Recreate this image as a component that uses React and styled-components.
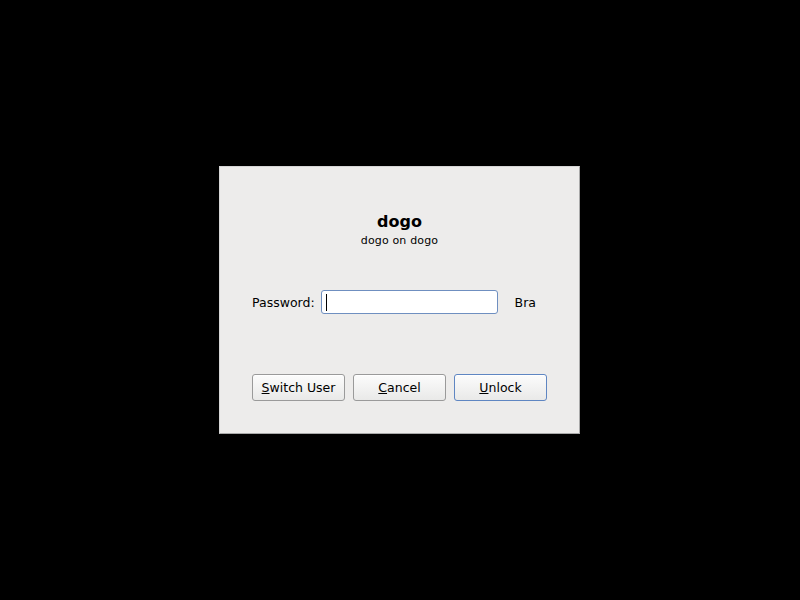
import React from "react";
import styled, { createGlobalStyle } from "styled-components";

const Global = createGlobalStyle`
  html, body {
    margin: 0;
    padding: 0;
    background: #000;
  }
  body {
    font-family: "DejaVu Sans", sans-serif;
  }
`;

const Screen = styled.div`
  box-sizing: border-box;
  width: 800px;
  height: 600px;
  padding-right: 1px;
  display: flex;
  align-items: center;
  justify-content: center;
  background: #000;
`;

const Dialog = styled.div`
  box-sizing: border-box;
  width: 361px;
  height: 268px;
  background: #edeceb;
  border: 1px solid #a9a9a9;
  border-top-color: #d6d6d6;
  border-left-color: #d6d6d6;
  display: flex;
  flex-direction: column;
  align-items: center;
  padding-top: 44px;
  color: #000;
`;

const Title = styled.div`
  font-size: 16px;
  font-weight: bold;
  line-height: 22px;
`;

const Subtitle = styled.div`
  margin-top: 1px;
  font-size: 11px;
  line-height: 14px;
  letter-spacing: 0.15px;
`;

const Row = styled.div`
  display: flex;
  align-items: center;
  margin-top: 42px;
  margin-left: -11px;
  font-size: 12.5px;
`;

const Label = styled.span`
  margin-right: 6px;
`;

const Field = styled.div`
  box-sizing: border-box;
  width: 177px;
  height: 24px;
  background: #fff;
  border: 1px solid #6f8fc0;
  border-radius: 3px;
  display: flex;
  align-items: center;
  padding-left: 4px;
`;

const Caret = styled.span`
  width: 1px;
  height: 17px;
  background: #000;
`;

const Hint = styled.span`
  margin-left: 17px;
`;

const Buttons = styled.div`
  display: flex;
  gap: 8px;
  margin-top: 60px;
`;

const Button = styled.div`
  box-sizing: border-box;
  width: 93px;
  height: 27px;
  display: flex;
  align-items: center;
  justify-content: center;
  font-size: 12.5px;
  border-radius: 3px;
  border: 1px solid ${(p) => (p.$default ? "#5f86c2" : "#9a9a9a")};
  background: linear-gradient(#fcfcfc, #e9e9e8);
  box-shadow: inset 0 1px 0 #fff;
`;

export default function App() {
  return (
    <>
      <Global />
      <Screen>
        <Dialog>
          <Title>dogo</Title>
          <Subtitle>dogo on dogo</Subtitle>
          <Row>
            <Label>Password:</Label>
            <Field>
              <Caret />
            </Field>
            <Hint>Bra</Hint>
          </Row>
          <Buttons>
            <Button>
              <span>
                <u>S</u>witch User
              </span>
            </Button>
            <Button>
              <span>
                <u>C</u>ancel
              </span>
            </Button>
            <Button $default>
              <span>
                <u>U</u>nlock
              </span>
            </Button>
          </Buttons>
        </Dialog>
      </Screen>
    </>
  );
}
